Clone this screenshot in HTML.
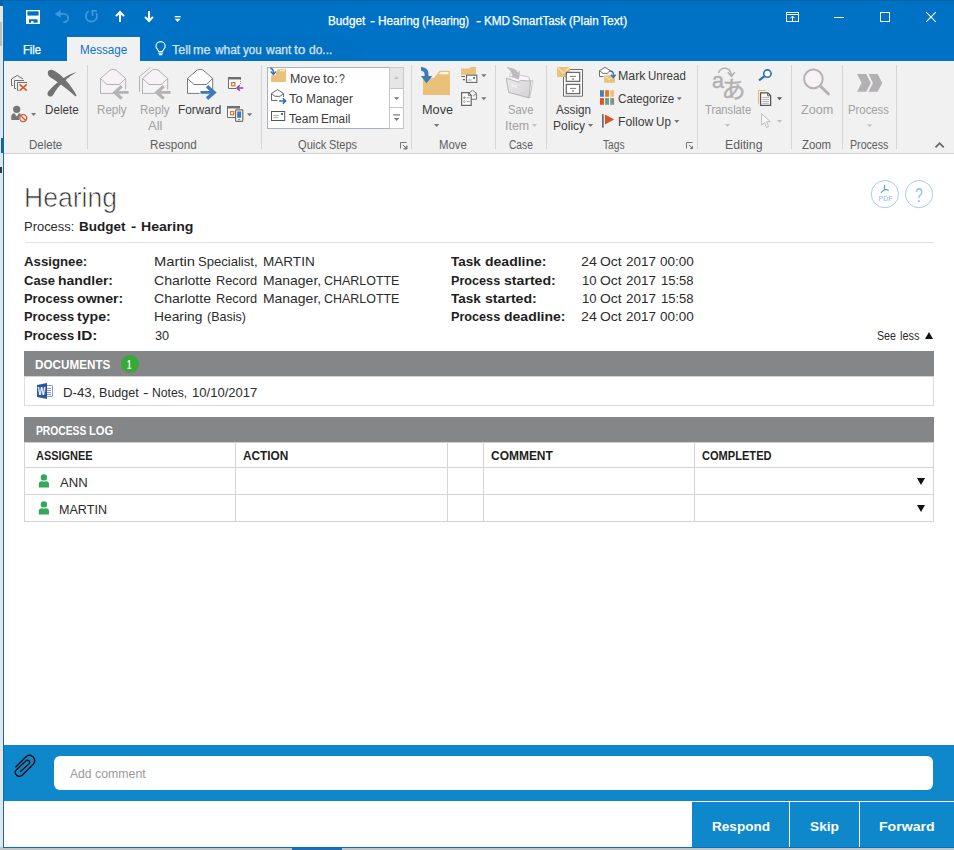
<!DOCTYPE html>
<html lang="en">
<head>
<meta charset="utf-8">
<title>Budget - Hearing (Hearing) - KMD SmartTask (Plain Text)</title>
<style>
html,body{margin:0;padding:0;}
body{width:954px;height:850px;overflow:hidden;background:#d9d9d9;font-family:"Liberation Sans",sans-serif;position:relative;}
.a{position:absolute;}
.t{position:absolute;transform-origin:0 0;white-space:pre;line-height:20px;font-family:"Liberation Sans",sans-serif;}
svg{position:absolute;overflow:visible;}
.sep{position:absolute;width:1px;top:65px;height:84px;background:#d6d6d6;}
</style>
</head>
<body>
<!-- desktop behind -->
<div class="a" style="left:0;top:0;width:3px;height:850px;background:#e6e6e6"></div>
<div class="a" style="left:0;top:0;width:3px;height:6px;background:#0a64ad"></div>
<div class="a" style="left:0;top:22px;width:2px;height:24px;background:#bdbdbd"></div>
<div class="a" style="left:1px;top:138px;width:2px;height:15px;background:#1160b8"></div>
<div class="a" style="left:0;top:167px;width:2px;height:6px;background:#3a3a3a"></div>
<div class="a" style="left:0;top:847px;width:954px;height:3px;background:#c4c4c4"></div>
<div class="a" style="left:292px;top:848px;width:50px;height:2px;background:#1f6fb5"></div>

<!-- window -->
<div id="window" class="a" style="left:3px;top:0;width:951px;height:848px;background:#fff;"></div>
<div class="a" style="left:3px;top:0;width:1px;height:848px;background:#0072c6"></div>
<div class="a" style="left:3px;top:847px;width:951px;height:1px;background:#0072c6"></div>

<!-- title bar -->
<header id="titlebar">
<div class="a" style="left:3px;top:0;width:951px;height:61px;background:#0072c6"></div>
<div class="a" style="left:3px;top:0;width:951px;height:1px;background:#0a62a8"></div>
<svg class="ic" width="954" height="850" viewBox="0 0 954 850" style="left:0;top:0" >
<rect x="26" y="10" width="14" height="14" fill="#fff"/>
<rect x="27.4" y="11.3" width="11.2" height="4.3" fill="#0072c6"/>
<path d="M29,19.2 H37.6 V22.8 H33.6 V21.3 H31 V22.8 H29 Z" fill="#0072c6"/>
<g fill="none" stroke="#4398de" stroke-width="1.7" stroke-linecap="butt" stroke-linejoin="miter">
<path d="M59.5,13.9 H63.6 C69.6,13.9 70,22.2 63.2,22.2"/>
<path d="M96.2,13.2 A5.6,5.6 0 1 1 88.6,11.2"/>
<path d="M92.4,15.8 V10.9 H96.9"/>
</g>
<path d="M54.9,13.9 L60.6,10 V17.8 Z" fill="#4398de"/>
<g fill="none" stroke="#fff" stroke-width="2">
<path d="M120,21.9 V11.6"/><path d="M116,16.1 L120,12 L124,16.1"/>
<path d="M149,11 V21.3"/><path d="M145,16.9 L149,21 L153,16.9"/>
</g>
<rect x="174.6" y="16" width="6" height="1.3" fill="#fff"/>
<path d="M174.6,18.7 h6 l-3,3.2z" fill="#fff"/>
</svg>
<span class="t" style="left:328.32px;top:11.00px;font-size:12px;transform:scaleX(0.9780);color:#fff;-webkit-text-stroke:0.25px #fff;">Budget </span>
<span class="t" style="left:369.50px;top:11.00px;font-size:12px;transform:scaleX(1.2604);color:#fff;-webkit-text-stroke:0.25px #fff;">- </span>
<span class="t" style="left:377.52px;top:11.00px;font-size:12px;transform:scaleX(0.9852);color:#fff;-webkit-text-stroke:0.25px #fff;">Hearing </span>
<span class="t" style="left:421.91px;top:11.00px;font-size:12px;transform:scaleX(0.9395);color:#fff;-webkit-text-stroke:0.25px #fff;">(Hearing) </span>
<span class="t" style="left:475.50px;top:11.00px;font-size:12px;transform:scaleX(1.2978);color:#fff;-webkit-text-stroke:0.25px #fff;">- </span>
<span class="t" style="left:483.78px;top:11.00px;font-size:12px;transform:scaleX(0.9753);color:#fff;-webkit-text-stroke:0.25px #fff;">KMD </span>
<span class="t" style="left:512.01px;top:11.00px;font-size:12px;transform:scaleX(0.9508);color:#fff;-webkit-text-stroke:0.25px #fff;">SmartTask </span>
<span class="t" style="left:569.13px;top:11.00px;font-size:12px;transform:scaleX(0.9638);color:#fff;-webkit-text-stroke:0.25px #fff;">(Plain </span>
<span class="t" style="left:601.00px;top:11.00px;font-size:12px;transform:scaleX(1.0075);color:#fff;-webkit-text-stroke:0.25px #fff;">Text)</span>
<svg class="ic" width="954" height="850" viewBox="0 0 954 850" style="left:0;top:0" >
<g fill="none" stroke="#fff" stroke-width="1">
<rect x="786.5" y="12.5" width="12" height="9"/>
<path d="M786.5,14.5 H798.5"/>
<path d="M792.5,21 V16.2"/><path d="M790.3,18.3 L792.5,16.1 L794.7,18.3"/>
<path d="M834,17.5 H844"/>
<rect x="880.5" y="12.5" width="9" height="9"/>
<path d="M926.2,12.2 L935.8,21.8 M935.8,12.2 L926.2,21.8" stroke-width="1.1"/>
</g>
</svg>
</header>

<!-- tabs -->
<nav id="tabs">
<div class="a" style="left:67px;top:37px;width:73px;height:24px;background:#f1f1f1"></div>
<span class="t" style="left:23.44px;top:40.00px;font-size:12px;transform:scaleX(0.9349);color:#fff;-webkit-text-stroke:0.25px #fff;">File</span>
<span class="t" style="left:79.55px;top:40.00px;font-size:12px;transform:scaleX(0.9716);color:#1072c4;">Message</span>
<span class="t" style="left:172.18px;top:40.00px;font-size:12px;transform:scaleX(1.0435);color:#fff;-webkit-text-stroke:0.25px #fff;">Tell </span>
<span class="t" style="left:193.45px;top:40.00px;font-size:12px;transform:scaleX(1.0532);color:#fff;-webkit-text-stroke:0.25px #fff;">me </span>
<span class="t" style="left:215.16px;top:40.00px;font-size:12px;transform:scaleX(0.9874);color:#fff;-webkit-text-stroke:0.25px #fff;">what </span>
<span class="t" style="left:243.30px;top:40.00px;font-size:12px;transform:scaleX(0.9671);color:#fff;-webkit-text-stroke:0.25px #fff;">you </span>
<span class="t" style="left:266.15px;top:40.00px;font-size:12px;transform:scaleX(0.9994);color:#fff;-webkit-text-stroke:0.25px #fff;">want </span>
<span class="t" style="left:294.44px;top:40.00px;font-size:12px;transform:scaleX(1.1349);color:#fff;-webkit-text-stroke:0.25px #fff;">to </span>
<span class="t" style="left:309.23px;top:40.00px;font-size:12px;transform:scaleX(1.0012);color:#fff;-webkit-text-stroke:0.25px #fff;">do...</span>
<svg class="ic" width="954" height="850" viewBox="0 0 954 850" style="left:0;top:0" >
<rect x="170" y="38" width="192" height="22" fill="#0067b4" opacity="0.18"/>
<g fill="none" stroke="#fff" stroke-width="1.1">
<path d="M158.6,51.6 C158.6,49.8 156,48.8 156,46.2 A4.6,4.6 0 0 1 165.2,46.2 C165.2,48.8 162.6,49.8 162.6,51.6 Z"/>
<path d="M158.4,53.2 H162.8 M158.9,54.6 H162.3"/>
</g>
</svg>
</nav>

<!-- ribbon -->
<section id="ribbon">
<div class="a" style="left:4px;top:61px;width:950px;height:92px;background:#f1f1f1"></div>
<div class="a" style="left:4px;top:153px;width:950px;height:1px;background:#d2d2d2"></div>
<div class="sep" style="left:87px"></div>
<div class="sep" style="left:261px"></div>
<div class="sep" style="left:411px"></div>
<div class="sep" style="left:495px"></div>
<div class="sep" style="left:546px"></div>
<div class="sep" style="left:697px"></div>
<div class="sep" style="left:791px"></div>
<div class="sep" style="left:842px"></div>
<div class="sep" style="left:896px"></div>
<div id="g-delete">
<svg class="ic" width="954" height="850" viewBox="0 0 954 850" style="left:0;top:0" >
<g fill="none" stroke="#707070" stroke-width="1">
<path d="M13.2,85.5 H11.5 V79 L17.2,75.4 L23,79"/>
<path d="M16,88.5 H14.5 V80.5 H24"/>
<path d="M18.6,90.5 H17.5 V82.5 H27"/>
</g>
<path d="M19.6,84.4 L26.8,90.6 M26.8,84.4 L19.6,90.6" stroke="#d8552f" stroke-width="1.6" fill="none"/>
<path d="M47.8,72.8 C47.8,70.2 50.8,69 53.8,70.5 C62.5,74.8 72,86.5 76.6,95.6 L75.5,96.4 C67,88.8 57,81.2 49.8,77 C48.3,76 47.8,74.4 47.8,72.8 Z" fill="#727272"/>
<path d="M76.6,72 C67.5,74.2 55,83.2 48.2,91.6 C46.9,93.4 47.3,95.6 49.1,96.3 C50.9,96.9 52.6,96 53.4,94.4 C58,86 67.5,77.4 76.6,72 Z" fill="#727272"/>
<circle cx="16.7" cy="109.3" r="3.6" fill="#757575"/>
<path d="M11.3,119.9 V116.5 C11.3,114.6 12.6,113.4 14.4,113.2 L16.7,116.6 L19,113.2 C20.8,113.4 22.1,114.6 22.1,116.5 V119.9 Z" fill="#757575"/>
<circle cx="23.2" cy="118.1" r="4.4" fill="#f1f1f1"/>
<circle cx="23.2" cy="118.1" r="3.5" fill="#f6f3f2" stroke="#d8552f" stroke-width="1.3"/>
<path d="M20.8,115.7 L25.6,120.5" stroke="#d8552f" stroke-width="1.3"/>
<path d="M31.0,113.0 h5.2 l-2.6,3.0 z" fill="#777"/></svg>
<span class="t" style="left:44.95px;top:100.00px;font-size:12px;transform:scaleX(0.9699);color:#3b3b3b;">Delete</span>
<span class="t" style="left:28.59px;top:135.00px;font-size:12px;transform:scaleX(0.9586);color:#5e5e5e;">Delete</span>
</div>
<div id="g-respond">
<svg class="ic" width="954" height="850" viewBox="0 0 954 850" style="left:0;top:0" ><path d="M113.5,93.4 H100.5 V78.5 L110.3,69.9 Q113.1,69 115.9,69.9 L125.7,78.5 V89.5" fill="#f6f2f6" stroke="#b4b2b4" stroke-width="1"/><path d="M100.5,78.5 L107.0,84.5 H119.2 L125.7,78.5" fill="none" stroke="#b4b2b4" stroke-width="1"/><path d="M115.1,92.4 H128.6" stroke="#b3b3b3" stroke-width="2.8" fill="none"/><path d="M121.8,86.2 L114.8,92.4 L121.8,98.6" stroke="#b3b3b3" stroke-width="3.2" fill="none" stroke-linejoin="miter"/><path d="M139.5,91.8 V76.6 L150.4,67.4" fill="none" stroke="#b4b2b4" stroke-width="1"/><path d="M155.5,93.4 H142.5 V78.5 L152.3,69.9 Q155.1,69 157.9,69.9 L167.7,78.5 V89.5" fill="#f6f2f6" stroke="#b4b2b4" stroke-width="1"/><path d="M142.5,78.5 L149.0,84.5 H161.2 L167.7,78.5" fill="none" stroke="#b4b2b4" stroke-width="1"/><path d="M157.1,92.4 H170.6" stroke="#b3b3b3" stroke-width="2.8" fill="none"/><path d="M163.8,86.2 L156.8,92.4 L163.8,98.6" stroke="#b3b3b3" stroke-width="3.2" fill="none" stroke-linejoin="miter"/><path d="M199.5,93.4 H187.5 V78.5 L197.3,69.9 Q200.1,69 202.9,69.9 L212.7,78.5 V89.5" fill="#fff" stroke="#7a7a7a" stroke-width="1"/><path d="M187.5,78.5 L194.0,84.5 H206.2 L212.7,78.5" fill="none" stroke="#7a7a7a" stroke-width="1"/><path d="M200.5,92.4 H214.0" stroke="#3d7abb" stroke-width="2.8" fill="none"/><path d="M207.0,86.2 L214.1,92.4 L207.0,98.6" stroke="#3d7abb" stroke-width="3.4" fill="none" stroke-linejoin="miter"/><rect x="228" y="77" width="13" height="2.6" fill="#6e6e6e"/>
<path d="M228.5,79 V88.5 H236" fill="none" stroke="#6e6e6e" stroke-width="1"/>
<path d="M240.5,79 V84" fill="none" stroke="#9a9a9a" stroke-width="1" stroke-dasharray="1,1"/>
<rect x="229" y="79.6" width="11" height="8.4" fill="#fff" opacity="0.7"/>
<rect x="231.7" y="82.6" width="3.2" height="3.2" fill="#fff" stroke="#e2711d" stroke-width="1.2"/>
<path d="M243.3,88 H237.5 M239.8,85.3 L237,88 L239.8,90.7" fill="none" stroke="#8e3fa8" stroke-width="1.5"/>
<rect x="227" y="106" width="13" height="2.6" fill="#6e6e6e"/>
<path d="M227.5,108 V117.5 H235" fill="none" stroke="#6e6e6e" stroke-width="1"/>
<rect x="228" y="108.6" width="8" height="8.4" fill="#fff" opacity="0.7"/>
<rect x="230.5" y="111.6" width="3.2" height="3.2" fill="#fff" stroke="#e2711d" stroke-width="1.2"/>
<rect x="235.6" y="109.9" width="7.2" height="11.4" rx="0.8" fill="#fff" stroke="#6e6e6e" stroke-width="1.2"/>
<rect x="237.2" y="111.4" width="4" height="6.4" fill="#3d7abb"/>
<path d="M238,119.7 H240.4" stroke="#6e6e6e" stroke-width="0.9"/>
<path d="M247.0,113.3 h5.2 l-2.6,3.0 z" fill="#777"/></svg>
<span class="t" style="left:97.36px;top:100.00px;font-size:12px;transform:scaleX(0.9666);color:#a1a1a1;">Reply</span>
<span class="t" style="left:139.60px;top:100.00px;font-size:12px;transform:scaleX(0.9625);color:#a1a1a1;">Reply</span>
<span class="t" style="left:147.99px;top:116.00px;font-size:12px;transform:scaleX(1.0856);color:#a1a1a1;">All</span>
<span class="t" style="left:177.74px;top:100.00px;font-size:12px;transform:scaleX(0.9824);color:#3b3b3b;">Forward</span>
<span class="t" style="left:150.14px;top:135.00px;font-size:12px;transform:scaleX(0.9730);color:#5e5e5e;">Respond</span>
</div>
<div id="g-quick">
<div class="a" style="left:267px;top:67px;width:123px;height:62px;background:#fff;border:1px solid #a9b2ba;box-sizing:border-box"></div>
<div class="a" style="left:389px;top:67px;width:15px;height:22px;box-sizing:border-box;background:#e6e6e6;border:1px solid #c9c9c9"></div>
<div class="a" style="left:389px;top:88px;width:15px;height:20px;box-sizing:border-box;background:#fff;border:1px solid #c6c6c6"></div>
<div class="a" style="left:389px;top:107px;width:15px;height:22px;box-sizing:border-box;background:#fff;border:1px solid #c6c6c6"></div>
<svg class="ic" width="954" height="850" viewBox="0 0 954 850" style="left:0;top:0" >
<path d="M271,82 V75.2 H275.5 L277.5,69.3 H286 V82 Z" fill="#e9c17b"/>
<path d="M280,70.3 H285 V71.3 H279.6Z" fill="#fff" opacity="0.85"/>
<path d="M270.3,68.3 C272.8,68.6 273.6,70.5 273.5,73.8" fill="none" stroke="#2f6fb7" stroke-width="1.5"/>
<path d="M270.8,71.6 L273.4,74.4 L276,71.6" fill="none" stroke="#2f6fb7" stroke-width="1.5"/>
<path d="M277.5,100.4 H271.5 V93.5 L277.5,89.6 L283.5,93.5 V97" fill="none" stroke="#666" stroke-width="1"/>
<path d="M271.5,93.5 L275,96.3 H280 L283.5,93.5" fill="none" stroke="#666" stroke-width="1"/>
<path d="M279.2,101 H285 M282.8,98.2 L285.6,101 L282.8,103.8" fill="none" stroke="#2f6fb7" stroke-width="1.6"/>
<rect x="271.5" y="111.5" width="13.2" height="9" fill="#fff" stroke="#555" stroke-width="1"/>
<path d="M273.3,115.5 H279 M273.3,117.6 H278" stroke="#a8a8a8" stroke-width="0.9"/>
<rect x="281" y="113" width="2" height="2" fill="#2f6fb7"/>
<path d="M394,79 h5 l-2.5,-2.8z" fill="#c3c3c3"/>
<path d="M394,97.2 h5.2 l-2.6,2.9z" fill="#777"/>
<rect x="393.2" y="114.3" width="6.8" height="1.2" fill="#777"/>
<path d="M394,118.1 h5.2 l-2.6,2.9z" fill="#777"/>
<path d="M400.5,148.5 V142.5 H406.5" fill="none" stroke="#777" stroke-width="1"/>
<path d="M403,145 L406.5,148.5 M407,145.5 V149 H403.5" fill="none" stroke="#777" stroke-width="1"/>
<path d="M407,149 V145.6 L403.6,149Z" fill="#777"/>
</svg>
<span class="t" style="left:289.60px;top:69.00px;font-size:12px;transform:scaleX(1.0319);color:#3b3b3b;">Move </span>
<span class="t" style="left:322.55px;top:69.00px;font-size:12px;transform:scaleX(1.1281);color:#3b3b3b;">to: </span>
<span class="t" style="left:338.79px;top:69.00px;font-size:12px;transform:scaleX(0.8721);color:#3b3b3b;">?</span>
<span class="t" style="left:289.16px;top:89.00px;font-size:12px;transform:scaleX(1.0674);color:#3b3b3b;">To </span>
<span class="t" style="left:305.73px;top:89.00px;font-size:12px;transform:scaleX(0.9887);color:#3b3b3b;">Manager</span>
<span class="t" style="left:289.17px;top:109.00px;font-size:12px;transform:scaleX(1.0044);color:#3b3b3b;">Team </span>
<span class="t" style="left:321.33px;top:109.00px;font-size:12px;transform:scaleX(0.9787);color:#3b3b3b;">Email</span>
<span class="t" style="left:297.99px;top:135.00px;font-size:12px;transform:scaleX(0.9255);color:#5e5e5e;">Quick </span>
<span class="t" style="left:329.48px;top:135.00px;font-size:12px;transform:scaleX(0.9108);color:#5e5e5e;">Steps</span>
</div>
<div id="g-move">
<svg class="ic" width="954" height="850" viewBox="0 0 954 850" style="left:0;top:0" >
<path d="M423,95 V78 H434 L439.5,70.8 H449 Q450,70.8 450,71.8 V95 Z" fill="#e9c17b"/>
<path d="M440.6,72 H448.5 V74.3 H438.9Z" fill="#fff" opacity="0.9"/>
<path d="M421,67 C426.5,67.2 429.2,70.5 428.4,76 L432.3,76 L426.5,83.3 L420.9,76 L424.6,76 C425,73.5 424.2,71.5 421,70.6 Z" fill="#3d7abb"/>
<path d="M461,74.8 V68.5 H469 L470.5,67 H476 V74.8Z" fill="#e9c17b"/>
<rect x="466.5" y="75.2" width="10.3" height="7.2" fill="#fff" stroke="#666" stroke-width="1.1"/>
<rect x="473.2" y="77" width="1.8" height="1.8" fill="#2f6fb7"/>
<path d="M468.2,80 H471.5" stroke="#888" stroke-width="0.9"/>
<path d="M461.3,76.5 H465 M462.8,79.6 H465" stroke="#666" stroke-width="1.1"/>
<path d="M469.5,99.3 H476.5 V93.3 L472.5,90.4 L469,92.8" fill="#f8f8f8" stroke="#777" stroke-width="1"/>
<path d="M476.5,93.3 L473,96.2" fill="none" stroke="#777" stroke-width="1"/>
<path d="M461.6,92.6 H468.6 L471.2,95.2 V105.4 H461.6 Z" fill="#fff" stroke="#666" stroke-width="1.2"/>
<path d="M468.4,92.8 V95.4 H471" fill="none" stroke="#666" stroke-width="0.9"/>
<circle cx="464.4" cy="97.7" r="0.9" fill="#aaa" stroke="#777" stroke-width="0.6"/>
<circle cx="464.4" cy="101.6" r="0.9" fill="#fff" stroke="#777" stroke-width="0.6"/>
<path d="M466.7,97.7 H469.6 M466.7,101.6 H469.6" stroke="#888" stroke-width="0.9"/>
<path d="M481.2,74.2 h5.2 l-2.6,3.0 z" fill="#777"/><path d="M481.2,97.2 h5.2 l-2.6,3.0 z" fill="#777"/><path d="M434.1,124.0 h5.2 l-2.6,3.0 z" fill="#777"/></svg>
<span class="t" style="left:421.83px;top:100.00px;font-size:12px;transform:scaleX(1.0575);color:#3b3b3b;">Move</span>
<span class="t" style="left:438.82px;top:135.00px;font-size:12px;transform:scaleX(0.9442);color:#5e5e5e;">Move</span>
</div>
<div id="g-case">
<svg class="ic" width="954" height="850" viewBox="0 0 954 850" style="left:0;top:0" >
<defs><linearGradient id="fg" x1="0" y1="0" x2="1" y2="1"><stop offset="0" stop-color="#ecebec"/><stop offset="1" stop-color="#d3d1d3"/></linearGradient></defs>
<path d="M519.6,75.2 L528.6,77 L529.8,81 L533,80.4 L529.6,98 L522,90 Z" fill="#f5f3f5" stroke="#bcbabc" stroke-width="0.8"/>
<path d="M510,80 L510,73 L519.5,75.2 L529,77.2 L528,96 Z" fill="#f8f6f8" stroke="#c8c6c8" stroke-width="0.6"/>
<path d="M506.2,78.2 L519,82.2 L520.4,80.4 L530.6,81.2 L529,97.9 L508.7,92.4 Z" fill="url(#fg)" stroke="#b0aeb0" stroke-width="0.9"/>
<path d="M510,82.8 L517.2,84.8 L517.6,88.6 L510.6,86.6Z" fill="#efeeef" stroke="#dcdadc" stroke-width="0.5"/>
<path d="M506.3,67 C512,67.4 516,69.4 518.4,72.4 L520,70.4 L519,79.6 L510,76.4 L512.6,75.2 C511.4,72.4 509.6,69.2 506.3,67Z" fill="#bdbbbd"/>
<path d="M532.0,124.0 h5.0 l-2.5,3.0 z" fill="#c3c3c3"/></svg>
<span class="t" style="left:507.86px;top:100.00px;font-size:12px;transform:scaleX(0.9263);color:#a1a1a1;">Save</span>
<span class="t" style="left:504.75px;top:116.00px;font-size:12px;transform:scaleX(1.0367);color:#a1a1a1;">Item</span>
<span class="t" style="left:508.84px;top:135.00px;font-size:12px;transform:scaleX(0.8504);color:#5e5e5e;">Case</span>
</div>
<div id="g-tags">
<svg class="ic" width="954" height="850" viewBox="0 0 954 850" style="left:0;top:0" >
<path d="M570,69.5 H582.5 V96.2 H563.5 V77" fill="#fff" stroke="#6a6a6a" stroke-width="1"/>
<rect x="557" y="67" width="13" height="10" fill="#e9c17b"/>
<path d="M557,67 L563.5,73 L570,67" fill="none" stroke="#f6e3bf" stroke-width="1.2"/>
<rect x="566.3" y="72.4" width="13.4" height="9" fill="#fff" stroke="#6a6a6a" stroke-width="1.3"/>
<rect x="566.3" y="84.4" width="13.4" height="9.2" fill="#fff" stroke="#6a6a6a" stroke-width="1.3"/>
<path d="M570,76.4 H576 M570,88.4 H576" stroke="#6a6a6a" stroke-width="0.9"/>
<rect x="572.3" y="78.3" width="1.5" height="1.5" fill="#6a6a6a"/>
<rect x="572.3" y="90.3" width="1.5" height="1.5" fill="#6a6a6a"/>
<path d="M603.5,76.5 H599.5 V70.6 L605,67.3 L610.4,70.6 V72" fill="#fff" stroke="#707070" stroke-width="1"/>
<path d="M599.5,70.6 L603,73.4 H607 L610.4,70.6" fill="none" stroke="#707070" stroke-width="1"/>
<rect x="604.2" y="75.4" width="10.8" height="7.4" fill="#e9c17b"/>
<path d="M604.2,75.4 L609.6,79.6 L615,75.4" fill="none" stroke="#f6e3bf" stroke-width="1.1"/>
<path d="M610.4,71 C613,71.2 613.8,73.4 613.4,76.6" fill="none" stroke="#2f6fb7" stroke-width="1.4"/>
<path d="M610.9,74.7 L613.2,77.5 L615.6,74.7" fill="none" stroke="#2f6fb7" stroke-width="1.4"/>
<rect x="600" y="90.2" width="3.9" height="6.6" fill="#4a7ebb"/>
<rect x="605.1" y="90.2" width="3.9" height="6.6" fill="#e67520"/>
<rect x="610.2" y="90.2" width="3.9" height="6.6" fill="#ebc27c"/>
<rect x="600" y="98.1" width="3.9" height="6.7" fill="#d9532c"/>
<rect x="605.1" y="98.1" width="3.9" height="6.7" fill="#5ea088"/>
<rect x="610.2" y="98.1" width="3.9" height="6.7" fill="#8c8c8c"/>
<rect x="602" y="114.2" width="1.7" height="13.4" fill="#6a6a6a"/>
<path d="M605,114.6 L614.2,119.6 L605,124.4Z" fill="#d9532c"/>
<path d="M686.5,148.5 V142.5 H692.5" fill="none" stroke="#777" stroke-width="1"/>
<path d="M689,145 L692.5,148.5" fill="none" stroke="#777" stroke-width="1"/>
<path d="M693,149 V145.6 L689.6,149Z" fill="#777"/>
<path d="M587.9,124.0 h5.2 l-2.6,3.0 z" fill="#777"/><path d="M676.7,97.3 h5.2 l-2.6,3.0 z" fill="#777"/><path d="M674.2,120.0 h5.2 l-2.6,3.0 z" fill="#777"/></svg>
<span class="t" style="left:556.39px;top:100.00px;font-size:12px;transform:scaleX(0.9709);color:#3b3b3b;">Assign</span>
<span class="t" style="left:552.70px;top:116.00px;font-size:12px;transform:scaleX(1.0039);color:#3b3b3b;">Policy</span>
<span class="t" style="left:617.77px;top:66.00px;font-size:12px;transform:scaleX(1.0325);color:#3b3b3b;">Mark </span>
<span class="t" style="left:647.67px;top:66.00px;font-size:12px;transform:scaleX(0.9605);color:#3b3b3b;">Unread</span>
<span class="t" style="left:617.68px;top:89.00px;font-size:12px;transform:scaleX(0.9698);color:#3b3b3b;">Categorize</span>
<span class="t" style="left:618.07px;top:112.00px;font-size:12px;transform:scaleX(1.0153);color:#3b3b3b;">Follow </span>
<span class="t" style="left:656.28px;top:112.00px;font-size:12px;transform:scaleX(0.9674);color:#3b3b3b;">Up</span>
<span class="t" style="left:602.90px;top:135.00px;font-size:12px;transform:scaleX(0.8512);color:#5e5e5e;">Tags</span>
</div>
<div id="g-edit">
<svg class="ic" width="954" height="850" viewBox="0 0 954 850" style="left:0;top:0" >
<text x="712" y="87.6" font-family="Liberation Sans, sans-serif" font-size="21.5" fill="#b3b1b3" stroke="#b3b1b3" stroke-width="0.5">a</text>
<text x="721.6" y="97.6" font-family="Liberation Sans, Noto Sans CJK JP, sans-serif" font-size="24" fill="#b3b1b3" stroke="#b3b1b3" stroke-width="0.5">あ</text>
<path d="M718.6,73 C720,66.5 730.5,66 731.4,75.4" fill="none" stroke="#b3b1b3" stroke-width="1.6"/>
<path d="M727.8,72.4 L731.4,76.2 L734.8,72.2" fill="none" stroke="#b3b1b3" stroke-width="1.6"/>
<circle cx="767.4" cy="73.6" r="3.7" fill="#fff" stroke="#2f6fb7" stroke-width="1.6"/>
<path d="M764.6,76.2 L759,80.3" stroke="#2f6fb7" stroke-width="2.2" fill="none"/>
<path d="M758.5,103.7 V90.5 H765.8" fill="none" stroke="#e9b765" stroke-width="1"/>
<path d="M760.6,92.8 H767.8 L770.6,95.6 V105.4 H760.6Z" fill="#fff" stroke="#555" stroke-width="1.3"/>
<path d="M767.6,93 V95.8 H770.4" fill="none" stroke="#555" stroke-width="0.9"/>
<path d="M762.4,97.4 H768.8 M762.4,99.4 H768.8 M762.4,101.4 H768.8 M762.4,103.3 H768.8" stroke="#999" stroke-width="0.8"/>
<path d="M761.6,113.6 V125.2 L764.4,122.6 L766.6,127.4 L768.6,126.5 L766.5,121.8 L770.2,121.6 Z" fill="#f8f8f8" stroke="#b5b5b5" stroke-width="0.9"/>
<path d="M776.9,97.2 h5.2 l-2.6,3.0 z" fill="#555"/><path d="M776.9,120.0 h5.2 l-2.6,3.0 z" fill="#c3c3c3"/><path d="M724.9,124.1 h5.2 l-2.6,3.0 z" fill="#c3c3c3"/></svg>
<span class="t" style="left:705.01px;top:100.00px;font-size:12px;transform:scaleX(0.9308);color:#a1a1a1;">Translate</span>
<span class="t" style="left:725.45px;top:135.00px;font-size:12px;transform:scaleX(1.0214);color:#5e5e5e;">Editing</span>
</div>
<div id="g-zoom">
<svg class="ic" width="954" height="850" viewBox="0 0 954 850" style="left:0;top:0" >
<circle cx="813.4" cy="78.9" r="9.3" fill="#f6f2f6" stroke="#b5b2b5" stroke-width="2"/>
<path d="M820.6,86.2 L828.4,94" stroke="#b5b2b5" stroke-width="3" stroke-linecap="round" fill="none"/>
</svg>
<span class="t" style="left:800.64px;top:100.00px;font-size:12px;transform:scaleX(1.0503);color:#a1a1a1;">Zoom</span>
<span class="t" style="left:801.93px;top:135.00px;font-size:12px;transform:scaleX(0.9489);color:#5e5e5e;">Zoom</span>
</div>
<div id="g-proc">
<svg class="ic" width="954" height="850" viewBox="0 0 954 850" style="left:0;top:0" >
<path d="M857,74 H866.2 L870.8,82.9 L866.2,91.8 H857 L861.6,82.9Z" fill="#b3b1b3"/>
<path d="M868.6,74 H877.6 L882.3,82.9 L877.6,91.8 H868.4 L873,82.9Z" fill="#b3b1b3"/>
<path d="M935.5,147.4 L939.6,143.2 L943.7,147.4" fill="none" stroke="#666" stroke-width="1.8"/>
<path d="M867.1,124.2 h5.0 l-2.5,3.0 z" fill="#c3c3c3"/></svg>
<span class="t" style="left:848.00px;top:100.00px;font-size:12px;transform:scaleX(0.9439);color:#a1a1a1;">Process</span>
<span class="t" style="left:849.69px;top:135.00px;font-size:12px;transform:scaleX(0.8857);color:#5e5e5e;">Process</span>
</div>
</section>

<!-- main content -->
<main id="content">
<span class="t" style="left:23.67px;top:188.00px;font-size:27.4px;transform:scaleX(0.9683);color:#303030;-webkit-text-stroke:0.7px #fff;">Hearing</span>
<span class="t" style="left:24.36px;top:217.00px;font-size:13px;transform:scaleX(0.9950);color:#2b2b2b;">Process:</span>
<span class="t" style="left:79.14px;top:217.00px;font-size:13px;transform:scaleX(1.0371);color:#1e1e1e;font-weight:700;">Budget </span>
<span class="t" style="left:130.58px;top:217.00px;font-size:13px;transform:scaleX(1.1949);color:#1e1e1e;font-weight:700;">- </span>
<span class="t" style="left:140.73px;top:217.00px;font-size:13px;transform:scaleX(1.0842);color:#1e1e1e;font-weight:700;">Hearing</span>
<svg class="ic" width="954" height="850" viewBox="0 0 954 850" style="left:0;top:0" >
<circle cx="884.9" cy="194.1" r="13.6" fill="#fff" stroke="#a3cdf0" stroke-width="1"/>
<circle cx="919" cy="194.1" r="13.6" fill="#fff" stroke="#a3cdf0" stroke-width="1"/>
<path d="M884.6,185.2 V189.4 L881.2,192.4 M884.6,189.4 L888.6,190.2" fill="none" stroke="#4a9de0" stroke-width="1.1" stroke-linecap="round"/>
<text x="878.6" y="200.5" font-family="Liberation Sans, sans-serif" font-size="7.4" fill="#8cc0eb" textLength="13.8" lengthAdjust="spacingAndGlyphs">PDF</text>
<text x="915.3" y="201.6" font-family="Liberation Sans, sans-serif" font-size="20" fill="#8cc0eb" style="-webkit-text-stroke:0.6px #fff" textLength="7.4" lengthAdjust="spacingAndGlyphs">?</text>
</svg>
<div class="a" style="left:25px;top:242px;width:909px;height:1px;background:#e2e2e2"></div>
<div id="fields">
<span class="t" style="left:23.90px;top:252.00px;font-size:13px;transform:scaleX(1.0169);color:#1e1e1e;font-weight:700;">Assignee:</span>
<span class="t" style="left:24.00px;top:271.00px;font-size:13px;transform:scaleX(0.9988);color:#1e1e1e;font-weight:700;">Case </span>
<span class="t" style="left:57.84px;top:271.00px;font-size:13px;transform:scaleX(1.0717);color:#1e1e1e;font-weight:700;">handler:</span>
<span class="t" style="left:23.97px;top:289.00px;font-size:13px;transform:scaleX(0.9916);color:#1e1e1e;font-weight:700;">Process </span>
<span class="t" style="left:76.87px;top:289.00px;font-size:13px;transform:scaleX(1.0867);color:#1e1e1e;font-weight:700;">owner:</span>
<span class="t" style="left:23.97px;top:307.00px;font-size:13px;transform:scaleX(0.9916);color:#1e1e1e;font-weight:700;">Process </span>
<span class="t" style="left:77.15px;top:307.00px;font-size:13px;transform:scaleX(1.0852);color:#1e1e1e;font-weight:700;">type:</span>
<span class="t" style="left:23.97px;top:326.00px;font-size:13px;transform:scaleX(0.9916);color:#1e1e1e;font-weight:700;">Process </span>
<span class="t" style="left:76.55px;top:326.00px;font-size:13px;transform:scaleX(1.1783);color:#1e1e1e;font-weight:700;">ID:</span>
<span class="t" style="left:153.75px;top:252.00px;font-size:13px;transform:scaleX(1.1348);color:#2b2b2b;">Martin </span>
<span class="t" style="left:197.92px;top:252.00px;font-size:13px;transform:scaleX(1.0053);color:#2b2b2b;">Specialist, </span>
<span class="t" style="left:263.09px;top:252.00px;font-size:13px;transform:scaleX(1.0422);color:#2b2b2b;">MARTIN</span>
<span class="t" style="left:154.49px;top:271.00px;font-size:13px;transform:scaleX(1.0798);color:#2b2b2b;">Charlotte </span>
<span class="t" style="left:215.51px;top:271.00px;font-size:13px;transform:scaleX(0.9815);color:#2b2b2b;">Record </span>
<span class="t" style="left:262.66px;top:271.00px;font-size:13px;transform:scaleX(1.0723);color:#2b2b2b;">Manager, </span>
<span class="t" style="left:323.70px;top:271.00px;font-size:13px;transform:scaleX(0.9579);color:#2b2b2b;">CHARLOTTE</span>
<span class="t" style="left:154.49px;top:289.00px;font-size:13px;transform:scaleX(1.0798);color:#2b2b2b;">Charlotte </span>
<span class="t" style="left:215.51px;top:289.00px;font-size:13px;transform:scaleX(0.9815);color:#2b2b2b;">Record </span>
<span class="t" style="left:262.66px;top:289.00px;font-size:13px;transform:scaleX(1.0723);color:#2b2b2b;">Manager, </span>
<span class="t" style="left:323.70px;top:289.00px;font-size:13px;transform:scaleX(0.9579);color:#2b2b2b;">CHARLOTTE</span>
<span class="t" style="left:154.06px;top:307.00px;font-size:13px;transform:scaleX(1.0610);color:#2b2b2b;">Hearing </span>
<span class="t" style="left:206.52px;top:307.00px;font-size:13px;transform:scaleX(0.9622);color:#2b2b2b;">(Basis)</span>
<span class="t" style="left:154.73px;top:326.00px;font-size:13px;transform:scaleX(0.9777);color:#2b2b2b;">30</span>
<span class="t" style="left:451.38px;top:252.00px;font-size:13px;transform:scaleX(1.0381);color:#1e1e1e;font-weight:700;">Task </span>
<span class="t" style="left:485.21px;top:252.00px;font-size:13px;transform:scaleX(1.0778);color:#1e1e1e;font-weight:700;">deadline:</span>
<span class="t" style="left:451.08px;top:271.00px;font-size:13px;transform:scaleX(0.9717);color:#1e1e1e;font-weight:700;">Process </span>
<span class="t" style="left:504.46px;top:271.00px;font-size:13px;transform:scaleX(1.0863);color:#1e1e1e;font-weight:700;">started:</span>
<span class="t" style="left:451.38px;top:289.00px;font-size:13px;transform:scaleX(1.0381);color:#1e1e1e;font-weight:700;">Task </span>
<span class="t" style="left:484.86px;top:289.00px;font-size:13px;transform:scaleX(1.0863);color:#1e1e1e;font-weight:700;">started:</span>
<span class="t" style="left:451.08px;top:307.00px;font-size:13px;transform:scaleX(0.9717);color:#1e1e1e;font-weight:700;">Process </span>
<span class="t" style="left:503.81px;top:307.00px;font-size:13px;transform:scaleX(1.0778);color:#1e1e1e;font-weight:700;">deadline:</span>
<span class="t" style="left:580.63px;top:252.00px;font-size:13px;transform:scaleX(1.0951);color:#2b2b2b;">24 </span>
<span class="t" style="left:599.95px;top:252.00px;font-size:13px;transform:scaleX(1.0680);color:#2b2b2b;">Oct </span>
<span class="t" style="left:625.60px;top:252.00px;font-size:13px;transform:scaleX(1.0331);color:#2b2b2b;">2017 </span>
<span class="t" style="left:660.09px;top:252.00px;font-size:13px;transform:scaleX(1.0363);color:#2b2b2b;">00:00</span>
<span class="t" style="left:581.78px;top:271.00px;font-size:13px;transform:scaleX(1.0079);color:#2b2b2b;">10 </span>
<span class="t" style="left:599.95px;top:271.00px;font-size:13px;transform:scaleX(1.0680);color:#2b2b2b;">Oct </span>
<span class="t" style="left:625.60px;top:271.00px;font-size:13px;transform:scaleX(1.0331);color:#2b2b2b;">2017 </span>
<span class="t" style="left:660.85px;top:271.00px;font-size:13px;transform:scaleX(1.0015);color:#2b2b2b;">15:58</span>
<span class="t" style="left:581.78px;top:289.00px;font-size:13px;transform:scaleX(1.0079);color:#2b2b2b;">10 </span>
<span class="t" style="left:599.95px;top:289.00px;font-size:13px;transform:scaleX(1.0680);color:#2b2b2b;">Oct </span>
<span class="t" style="left:625.60px;top:289.00px;font-size:13px;transform:scaleX(1.0331);color:#2b2b2b;">2017 </span>
<span class="t" style="left:660.85px;top:289.00px;font-size:13px;transform:scaleX(1.0015);color:#2b2b2b;">15:58</span>
<span class="t" style="left:580.63px;top:307.00px;font-size:13px;transform:scaleX(1.0951);color:#2b2b2b;">24 </span>
<span class="t" style="left:599.95px;top:307.00px;font-size:13px;transform:scaleX(1.0680);color:#2b2b2b;">Oct </span>
<span class="t" style="left:625.60px;top:307.00px;font-size:13px;transform:scaleX(1.0331);color:#2b2b2b;">2017 </span>
<span class="t" style="left:660.09px;top:307.00px;font-size:13px;transform:scaleX(1.0363);color:#2b2b2b;">00:00</span>
<span class="t" style="left:877.23px;top:326.00px;font-size:12px;transform:scaleX(0.8890);color:#2b2b2b;">See </span>
<span class="t" style="left:899.53px;top:326.00px;font-size:12px;transform:scaleX(0.9143);color:#2b2b2b;">less</span>
<div class="a" style="left:925px;top:332px;width:0;height:0;border-left:4.5px solid transparent;border-right:4.5px solid transparent;border-bottom:7.5px solid #111"></div>
</div>
<div id="documents">
<div class="a" style="left:24px;top:351px;width:910px;height:25px;background:#858687"></div>
<div class="a" style="left:121px;top:355px;width:18px;height:18px;border-radius:50%;background:#36a936"></div>
<div class="a" style="left:24px;top:376px;width:910px;height:30px;box-sizing:border-box;border:1px solid #dcdcdc;border-top-color:#d2d2d2;background:#fff"></div>
<svg class="ic" width="954" height="850" viewBox="0 0 954 850" style="left:0;top:0" >
<rect x="46.5" y="385.5" width="6" height="11" rx="0.6" fill="#fff" stroke="#7f9ccb" stroke-width="1"/>
<path d="M47,388.5 H51 M47,390.5 H51 M47,392.5 H51 M47,394.5 H51" stroke="#6f8fc4" stroke-width="0.9"/>
<path d="M37,385 L47,383 V399 L37,397Z" fill="#2b579a"/>
<text x="37.8" y="394.8" font-family="Liberation Sans, sans-serif" font-weight="700" font-size="10.6" fill="#fff" textLength="7.6" lengthAdjust="spacingAndGlyphs">W</text>
</svg>
<span class="t" style="left:35.47px;top:355.00px;font-size:12px;transform:scaleX(0.9740);color:#fff;font-weight:700;">DOCUMENTS</span>
<span class="t" style="left:127.06px;top:355.00px;font-size:12.5px;transform:scaleX(0.6143);color:#fff;font-weight:700;">1</span>
<span class="t" style="left:62.88px;top:383.00px;font-size:13px;transform:scaleX(1.0186);color:#2b2b2b;">D-43, </span>
<span class="t" style="left:98.97px;top:383.00px;font-size:13px;transform:scaleX(0.9665);color:#2b2b2b;">Budget </span>
<span class="t" style="left:142.82px;top:383.00px;font-size:13px;transform:scaleX(1.2624);color:#2b2b2b;">- </span>
<span class="t" style="left:152.18px;top:383.00px;font-size:13px;transform:scaleX(0.9366);color:#2b2b2b;">Notes, </span>
<span class="t" style="left:192.03px;top:383.00px;font-size:13px;transform:scaleX(1.0041);color:#2b2b2b;">10/10/2017</span>
</div>
<div id="processlog">
<div class="a" style="left:24px;top:417px;width:910px;height:25px;background:#858687"></div>
<div class="a" style="left:24px;top:442px;width:910px;height:80px;box-sizing:border-box;border:1px solid #d4d4d4;border-top-color:#cfcfcf;background:#fff"></div>
<div class="a" style="left:24px;top:467px;width:910px;height:1px;background:#d4d4d4"></div>
<div class="a" style="left:24px;top:494px;width:910px;height:1px;background:#d4d4d4"></div>
<div class="a" style="left:235px;top:442px;width:1px;height:79px;background:#d4d4d4"></div>
<div class="a" style="left:447px;top:442px;width:1px;height:79px;background:#d4d4d4"></div>
<div class="a" style="left:483px;top:442px;width:1px;height:79px;background:#d4d4d4"></div>
<div class="a" style="left:694px;top:442px;width:1px;height:79px;background:#d4d4d4"></div>
<svg class="ic" width="954" height="850" viewBox="0 0 954 850" style="left:0;top:0" ><circle cx="43.9" cy="477.4" r="3.2" fill="#33a85b"/><path d="M38.8,487.6 v-3.4 a2.9,2.9 0 0 1 2.9,-2.9 h0.4 a3.9,3.9 0 0 0 3.6,0 h0.4 a2.9,2.9 0 0 1 2.9,2.9 v3.4 z" fill="#33a85b"/><circle cx="43.9" cy="504.4" r="3.2" fill="#33a85b"/><path d="M38.8,514.6 v-3.4 a2.9,2.9 0 0 1 2.9,-2.9 h0.4 a3.9,3.9 0 0 0 3.6,0 h0.4 a2.9,2.9 0 0 1 2.9,2.9 v3.4 z" fill="#33a85b"/></svg>
<div class="a" style="left:916.5px;top:478px;width:0;height:0;border-left:4.5px solid transparent;border-right:4.5px solid transparent;border-top:7px solid #111"></div>
<div class="a" style="left:916.5px;top:505px;width:0;height:0;border-left:4.5px solid transparent;border-right:4.5px solid transparent;border-top:7px solid #111"></div>
<span class="t" style="left:35.68px;top:421.00px;font-size:12px;transform:scaleX(0.8581);color:#fff;font-weight:700;">PROCESS </span>
<span class="t" style="left:88.93px;top:421.00px;font-size:12px;transform:scaleX(0.9325);color:#fff;font-weight:700;">LOG</span>
<span class="t" style="left:35.96px;top:446.00px;font-size:12px;transform:scaleX(0.9112);color:#1e1e1e;font-weight:700;">ASSIGNEE</span>
<span class="t" style="left:243.27px;top:446.00px;font-size:12px;transform:scaleX(0.9845);color:#1e1e1e;font-weight:700;">ACTION</span>
<span class="t" style="left:490.54px;top:446.00px;font-size:12px;transform:scaleX(0.9973);color:#1e1e1e;font-weight:700;">COMMENT</span>
<span class="t" style="left:702.45px;top:446.00px;font-size:12px;transform:scaleX(0.9228);color:#1e1e1e;font-weight:700;">COMPLETED</span>
<span class="t" style="left:60.12px;top:473.00px;font-size:13px;transform:scaleX(1.0081);color:#2b2b2b;">ANN</span>
<span class="t" style="left:59.36px;top:500.00px;font-size:13px;transform:scaleX(0.9672);color:#2b2b2b;">MARTIN</span>
</div>
</main>

<!-- footer -->
<footer id="footer">
<div class="a" style="left:4px;top:745px;width:950px;height:56px;background:#0e88cb"></div>
<svg class="ic" width="954" height="850" viewBox="0 0 954 850" style="left:0;top:0" >
<path d="M15.8,766.9 L25.8,756.9 C29,753.8 33.2,755.6 34.4,759 C35.2,761.4 34.2,763.2 33.2,764.3 L22.4,775.1 C20,777.4 16.4,776.4 15.4,773.6 C14.8,771.8 15.6,770.6 16.5,769.8 L25.8,761 C27.4,759.6 29.4,760.4 29.7,762 C29.8,762.8 29.4,763.4 28.8,763.9 L20.5,771.6" fill="none" stroke="#0b0b0b" stroke-width="1.35" stroke-linecap="round"/>
</svg>
<div class="a" style="left:54px;top:756px;width:879px;height:34px;background:#fff;border-radius:6px"></div>
<span class="t" style="left:69.99px;top:764.00px;font-size:12px;transform:scaleX(1.0076);color:#9a9a9a;">Add </span>
<span class="t" style="left:94.97px;top:764.00px;font-size:12px;transform:scaleX(1.0264);color:#9a9a9a;">comment</span>
<div class="a" style="left:692px;top:802px;width:97px;height:45px;background:#0e88cb"></div>
<span class="t" style="left:711.94px;top:817.00px;font-size:13px;transform:scaleX(1.0433);color:#fff;font-weight:700;">Respond</span>
<div class="a" style="left:790px;top:802px;width:69px;height:45px;background:#0e88cb"></div>
<span class="t" style="left:809.62px;top:817.00px;font-size:13px;transform:scaleX(1.0564);color:#fff;font-weight:700;">Skip</span>
<div class="a" style="left:860px;top:802px;width:94px;height:45px;background:#0e88cb"></div>
<span class="t" style="left:879.33px;top:817.00px;font-size:13px;transform:scaleX(1.0857);color:#fff;font-weight:700;">Forward</span>
</footer>
</body>
</html>
